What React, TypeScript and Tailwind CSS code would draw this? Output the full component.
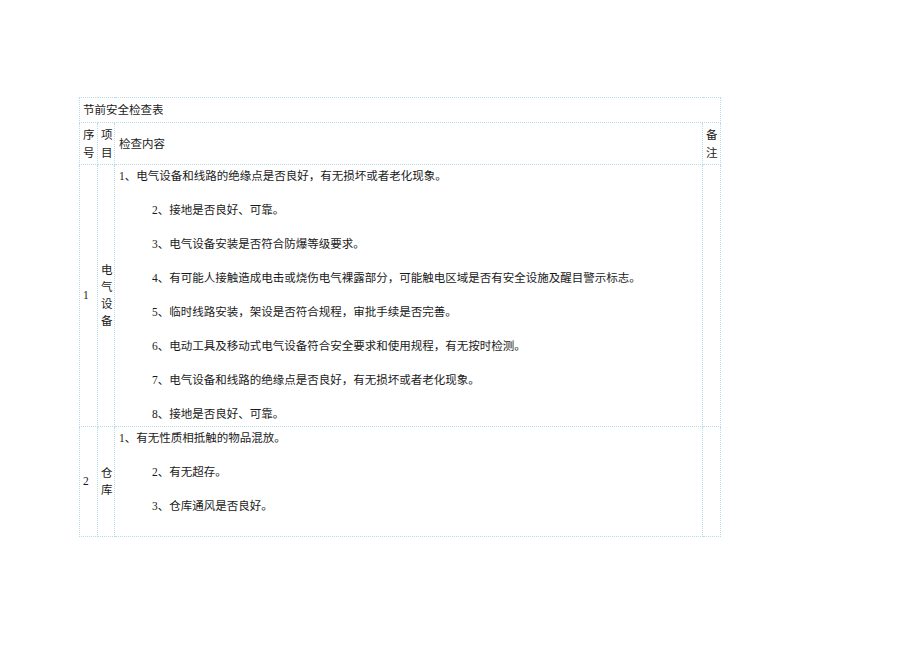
const rowOne = [
  "1、电气设备和线路的绝缘点是否良好，有无损坏或者老化现象。",
  "2、接地是否良好、可靠。",
  "3、电气设备安装是否符合防爆等级要求。",
  "4、有可能人接触造成电击或烧伤电气裸露部分，可能触电区域是否有安全设施及醒目警示标志。",
  "5、临时线路安装，架设是否符合规程，审批手续是否完善。",
  "6、电动工具及移动式电气设备符合安全要求和使用规程，有无按时检测。",
  "7、电气设备和线路的绝缘点是否良好，有无损坏或者老化现象。",
  "8、接地是否良好、可靠。",
];

const rowTwo = ["1、有无性质相抵触的物品混放。", "2、有无超存。", "3、仓库通风是否良好。"];

const cell = "border border-dotted border-[#b9dbe8] p-0";

function Items({ items }: { items: string[] }) {
  return (
    <div className="flex flex-col gap-[17px] pl-[4px] pt-[3px]">
      {items.map((t, i) => (
        <p key={i} className={i === 0 ? "" : "ml-[33px]"}>
          {t}
        </p>
      ))}
    </div>
  );
}

export default function App() {
  return (
    <div
      className="min-h-[651px] w-[920px] bg-white pl-[79px] pt-[97px] text-[11.5px] leading-[17px] text-[#1a1a1a]"
      style={{ fontFamily: '"Liberation Serif", "Noto Sans CJK SC", serif' }}
    >
      <table className="w-[641px] table-fixed border-collapse">
        <colgroup>
          <col className="w-[18px]" />
          <col className="w-[17px]" />
          <col className="w-[588px]" />
          <col className="w-[18px]" />
        </colgroup>
        <tbody>
          <tr className="h-[25px]">
            <td colSpan={4} className={`${cell} pl-[3px] align-middle`}>
              节前安全检查表
            </td>
          </tr>
          <tr className="h-[42px] leading-[18px]">
            <td className={`${cell} px-[3px] align-middle`}>序号</td>
            <td className={`${cell} px-[3px] align-middle`}>项目</td>
            <td className={`${cell} pl-[4px] align-middle`}>检查内容</td>
            <td className={`${cell} px-[3px] align-middle`}>备注</td>
          </tr>
          <tr className="h-[262px]">
            <td className={`${cell} px-[3px] align-middle`}>1</td>
            <td className={`${cell} px-[3px] align-middle`}>电气设备</td>
            <td className={`${cell} align-top`}>
              <Items items={rowOne} />
            </td>
            <td className={cell}></td>
          </tr>
          <tr className="h-[110px]">
            <td className={`${cell} px-[3px] align-middle`}>2</td>
            <td className={`${cell} px-[3px] align-middle`}>仓库</td>
            <td className={`${cell} align-top`}>
              <Items items={rowTwo} />
            </td>
            <td className={cell}></td>
          </tr>
        </tbody>
      </table>
    </div>
  );
}
